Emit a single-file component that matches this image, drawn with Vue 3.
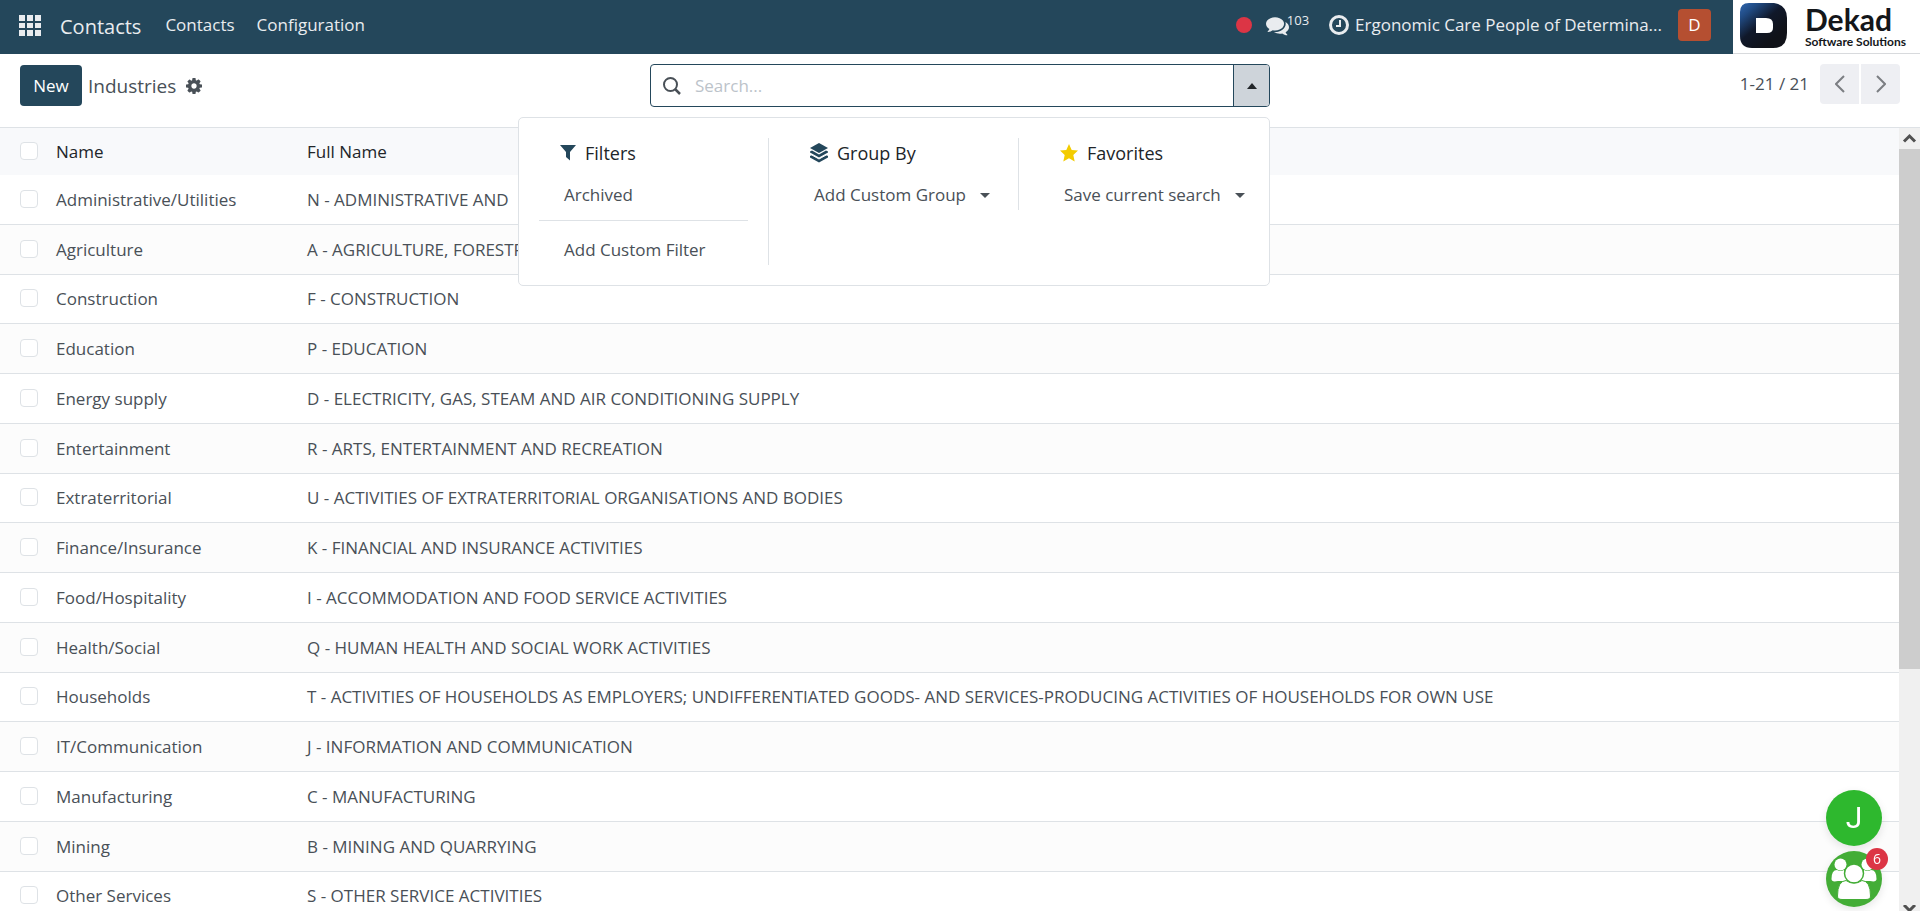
<script setup>
import { ref } from 'vue'

const query = ref('')
const allSelected = ref(false)

const industries = ref([
  { name: 'Administrative/Utilities', full: 'N - ADMINISTRATIVE AND' },
  { name: 'Agriculture', full: 'A - AGRICULTURE, FORESTR' },
  { name: 'Construction', full: 'F - CONSTRUCTION' },
  { name: 'Education', full: 'P - EDUCATION' },
  { name: 'Energy supply', full: 'D - ELECTRICITY, GAS, STEAM AND AIR CONDITIONING SUPPLY' },
  { name: 'Entertainment', full: 'R - ARTS, ENTERTAINMENT AND RECREATION' },
  { name: 'Extraterritorial', full: 'U - ACTIVITIES OF EXTRATERRITORIAL ORGANISATIONS AND BODIES' },
  { name: 'Finance/Insurance', full: 'K - FINANCIAL AND INSURANCE ACTIVITIES' },
  { name: 'Food/Hospitality', full: 'I - ACCOMMODATION AND FOOD SERVICE ACTIVITIES' },
  { name: 'Health/Social', full: 'Q - HUMAN HEALTH AND SOCIAL WORK ACTIVITIES' },
  { name: 'Households', full: 'T - ACTIVITIES OF HOUSEHOLDS AS EMPLOYERS; UNDIFFERENTIATED GOODS- AND SERVICES-PRODUCING ACTIVITIES OF HOUSEHOLDS FOR OWN USE' },
  { name: 'IT/Communication', full: 'J - INFORMATION AND COMMUNICATION' },
  { name: 'Manufacturing', full: 'C - MANUFACTURING' },
  { name: 'Mining', full: 'B - MINING AND QUARRYING' },
  { name: 'Other Services', full: 'S - OTHER SERVICE ACTIVITIES' },
].map((row) => ({ ...row, selected: false })))

function toggleAll() {
  industries.value.forEach((row) => { row.selected = allSelected.value })
}
</script>

<template>
  <div class="app">
    <header class="topbar">
      <nav class="nav">
        <button class="apps" type="button" aria-label="Home menu">
          <svg width="22" height="21" viewBox="0 0 22 21" fill="#e9ecef">
            <path d="M0 0h6v6H0zM8 0h6v6H8zM16 0h6v6h-6zM0 8h6v5H0zM8 8h6v5H8zM16 8h6v5h-6zM0 15h6v6H0zM8 15h6v6H8zM16 15h6v6h-6z" />
          </svg>
        </button>
        <a class="brand" href="#">Contacts</a>
        <a class="menu" href="#">Contacts</a>
        <a class="menu" href="#">Configuration</a>
        <div class="systray">
          <span class="dot"></span>
          <button class="messages" type="button" aria-label="Messages">
            <svg width="23" height="23" viewBox="0 0 1792 1792" fill="#e9ecef">
              <path d="M1408 768q0 139-94 257t-256.500 186.500-353.500 68.500q-86 0-176-16-124 88-278 128-36 9-86 16h-3q-11 0-20.500-8t-11.500-21q-1-3-1-6.500t.5-6.500 2-6l2.500-5 3.500-5.500 4-5 4.500-5 4-4.500q5-6 23-25t26-29.500 22.500-29 25-38.500 20.500-44q-124-72-195-177t-71-224q0-139 94-257t256.500-186.500 353.500-68.500 353.500 68.500 256.500 186.500 94 257zm384 256q0 120-71 224.500t-195 176.500q10 24 20.500 44t25 38.500 22.500 29 26 29.500 23 25q1 1 4 4.500t4.500 5 4 5 3.500 5.500l2.500 5 2 6 .5 6.500-1 6.500q-3 14-13 22t-22 7q-50-7-86-16-154-40-278-128-90 16-176 16-271 0-472-132 58 4 88 4 161 0 309-45t264-129q125-92 192-212t67-254q0-77-23-152 129 71 204 178t75 230z" />
            </svg>
            <span class="count">103</span>
          </button>
          <button class="activity" type="button" aria-label="Activities">
            <svg width="20" height="20" viewBox="0 0 20 20" fill="none" stroke="#e9ecef">
              <circle cx="10" cy="10" r="8.500" stroke-width="3" />
              <path d="M11 5v6H7" stroke-width="2" />
            </svg>
          </button>
          <button class="company" type="button">Ergonomic Care People of Determina...</button>
          <button class="user" type="button" aria-label="User menu">D</button>
        </div>
      </nav>
      <a class="logo" href="#">
        <svg width="47" height="45" viewBox="0 0 47 45">
          <defs>
            <linearGradient id="mark" x1="0" y1="0" x2="0.700" y2="0.800">
              <stop offset="0" stop-color="#2f66b0" />
              <stop offset="0.250" stop-color="#204a82" />
              <stop offset="0.600" stop-color="#10182a" />
              <stop offset="1" stop-color="#101218" />
            </linearGradient>
          </defs>
          <path d="M9 0H34Q47 2 47 15V30Q47 45 33 45H12Q0 45 0 33V9Q0 0 9 0Z" fill="url(#mark)" />
          <path d="M16 15H26Q33 15 33 21V25Q33 30 27 30H16Z" fill="#fff" />
        </svg>
        <span class="wordmark">
          <span class="word">Dekad</span>
          <span class="tagline">Software Solutions</span>
        </span>
      </a>
    </header>

    <section class="control">
      <div class="crumbs">
        <button class="new" type="button">New</button>
        <h1>Industries</h1>
        <button class="gear" type="button" aria-label="Actions">
          <svg width="16" height="16" viewBox="0 -128 1536 1536" fill="#495057">
            <path d="M1024 640q0-106-75-181t-181-75-181 75-75 181 75 181 181 75 181-75 75-181zm512-109v222q0 12-8 23t-20 13l-185 28q-19 54-39 91 35 50 107 138 10 12 10 25t-9 23q-27 37-99 108t-94 71q-12 0-26-9l-138-108q-44 23-91 38-16 136-29 186-7 28-36 28h-222q-14 0-24.500-8.500t-11.500-21.500l-28-184q-49-16-90-37l-141 107q-10 9-25 9-14 0-25-11-126-114-165-168-7-10-7-23 0-12 8-23 15-21 51-66.500t54-70.500q-27-50-41-99l-183-27q-13-2-21-12.500t-8-23.500v-222q0-12 8-23t19-13l186-28q14-46 39-92-40-57-107-138-10-12-10-24 0-10 9-23 26-36 98.500-107.500t94.500-71.500q13 0 26 10l138 107q44-23 91-38 16-136 29-186 7-28 36-28h222q14 0 24.500 8.500t11.500 21.500l28 184q49 16 90 37l142-107q9-9 24-9 13 0 25 10 129 119 165 170 7 8 7 22 0 12-8 23-15 21-51 66.500t-54 70.500q26 50 41 98l183 28q13 2 21 12.500t8 23.500z" />
          </svg>
        </button>
      </div>

      <div class="search">
        <div class="searchbox">
          <svg class="lens" width="18" height="18" viewBox="0 0 18 18" fill="none" stroke="#495057">
            <circle cx="7.500" cy="7.500" r="6.500" stroke-width="2" />
            <path d="M12 12l5 5" stroke-width="2.500" />
          </svg>
          <input v-model="query" type="text" placeholder="Search..." aria-label="Search" />
          <button class="toggle" type="button" aria-label="Toggle search panel">
            <svg width="10" height="6" viewBox="0 0 10 6" fill="#212529"><path d="M0 6L5 0l5 6z" /></svg>
          </button>
        </div>

        <div class="panel">
          <section class="group">
            <h2>
              <svg width="16" height="16" viewBox="0 0 16 16" fill="#24475b">
                <path d="M0 0h16L10 7v8.500L6 12V7z" />
              </svg>
              Filters
            </h2>
            <button class="item" type="button">Archived</button>
            <hr />
            <button class="item" type="button">Add Custom Filter</button>
          </section>
          <section class="group">
            <h2>
              <svg width="18" height="20" viewBox="0 0 18 20" fill="#24475b">
                <path d="M9 0l9 5-9 5-9-5z" />
                <path d="M0 8.500l2-1 7 4 7-4 2 1v1l-9 5-9-5z" />
                <path d="M0 13l2-1 7 4 7-4 2 1v1.500L9 19.500 0 14.500z" />
                <path d="M0 11l9 5 9-5" fill="none" stroke="#fff" stroke-width="1" />
              </svg>
              Group By
            </h2>
            <button class="item" type="button">
              Add Custom Group
              <svg width="10" height="5" viewBox="0 0 10 5" fill="#495057"><path d="M0 0h10L5 5z" /></svg>
            </button>
          </section>
          <section class="group">
            <h2>
              <svg width="18" height="18" viewBox="0 0 18 18" fill="#f3cc00">
                <path d="M9 0l2.700 5.900 6.300.7-4.700 4.300 1.400 6.600L9 14.200l-5.700 3.300 1.400-6.600L0 6.600l6.300-.7z" />
              </svg>
              Favorites
            </h2>
            <button class="item" type="button">
              Save current search
              <svg width="10" height="5" viewBox="0 0 10 5" fill="#495057"><path d="M0 0h10L5 5z" /></svg>
            </button>
          </section>
        </div>
      </div>

      <div class="pager">
        <span>1-21 / 21</span>
        <div class="steps">
          <button type="button" aria-label="Previous">
            <svg width="10" height="18" viewBox="0 0 10 18" fill="none" stroke="#7b7e82" stroke-width="2"><path d="M9 1L1 9l8 8" /></svg>
          </button>
          <button type="button" aria-label="Next">
            <svg width="10" height="18" viewBox="0 0 10 18" fill="none" stroke="#7b7e82" stroke-width="2"><path d="M1 1l8 8-8 8" /></svg>
          </button>
        </div>
      </div>
    </section>

    <main class="content">
      <div class="list">
        <table>
          <thead>
            <tr>
              <th class="pick"><input v-model="allSelected" type="checkbox" aria-label="Select all" @change="toggleAll" /></th>
              <th class="name">Name</th>
              <th>Full Name</th>
            </tr>
          </thead>
          <tbody>
            <tr v-for="row in industries" :key="row.name">
              <td class="pick"><input v-model="row.selected" type="checkbox" :aria-label="row.name" /></td>
              <td>{{ row.name }}</td>
              <td>{{ row.full }}</td>
            </tr>
          </tbody>
        </table>
      </div>
      <div class="scrollbar" aria-hidden="true">
        <svg class="up" width="21" height="21" viewBox="0 0 21 21" fill="none" stroke="#505050" stroke-width="3"><path d="M5 13.500l5.500-5.500 5.500 5.500" /></svg>
        <div class="thumb"></div>
        <div class="track"></div>
        <svg width="21" height="6" viewBox="0 0 21 6" fill="none" stroke="#505050" stroke-width="3"><path d="M5 0l5.500 5.500L16 0" /></svg>
      </div>
    </main>

    <aside class="chats">
      <button class="bubble" type="button">J</button>
      <button class="bubble team" type="button" aria-label="Team channel">
        <svg width="56" height="56" viewBox="0 0 56 56" fill="#fff">
          <circle cx="14.500" cy="13.500" r="6" />
          <circle cx="41.500" cy="13.500" r="6" />
          <path d="M5.500 28Q5.500 19 11 19Q14.500 21 18 19Q19.500 26 23 30H12Q5.500 31.500 5.500 28Z" />
          <path d="M50.500 28Q50.500 19 45 19Q41.500 21 38 19Q36.500 26 33 30H44Q50.500 31.500 50.500 28Z" />
          <circle cx="28" cy="22.500" r="9.500" stroke="#43ad36" stroke-width="1.500" />
          <path d="M11.500 45Q11.500 30 20 29.500Q28 35 36 29.500Q44.500 30 44.500 45Q44.500 48.500 40 48.500H16Q11.500 48.500 11.500 45Z" stroke="#43ad36" />
        </svg>
        <span class="badge">6</span>
      </button>
    </aside>
  </div>
</template>

<style>
body {
  margin: 0;
  overflow: hidden;
}
</style>

<style scoped>
.app {
  display: flex;
  flex-direction: column;
  height: 100vh;
  overflow: hidden;
  background: #fff;
  color: #495057;
  font-family: "Open Sans", "Noto Sans", sans-serif;
  font-size: 17px;
  line-height: 24px;
}

button {
  display: flex;
  align-items: center;
  justify-content: center;
  padding: 0;
  border: 0;
  background: none;
  color: inherit;
  font: inherit;
  white-space: nowrap;
  cursor: pointer;
}

a {
  color: inherit;
  text-decoration: none;
}

svg {
  display: block;
  flex: none;
}

.topbar {
  display: flex;
  flex: none;
  height: 54px;
}

.nav {
  display: flex;
  flex: 1;
  align-items: center;
  padding: 0 22px 4px 19px;
  background: #24475b;
  color: #e9ecef;
}

.brand {
  margin: 4px 24px 0 19px;
  font-size: 20px;
}

.menu {
  margin-right: 22px;
}

.systray {
  display: flex;
  align-items: center;
  margin-left: auto;
}

.dot {
  width: 16px;
  height: 16px;
  border-radius: 50%;
  background: #dc3545;
}

.messages {
  align-items: flex-start;
  margin: 0 20px 0 14px;
}

.count {
  margin-left: -2px;
  font-size: 13px;
  line-height: 12px;
}

.activity {
  margin-right: 6px;
}

.company {
  margin-right: 16px;
}

.user {
  width: 33px;
  height: 32px;
  border-radius: 4px;
  background: #b54f31;
  color: #fff;
}

.logo {
  display: flex;
  gap: 18px;
  align-items: center;
  box-sizing: border-box;
  width: 187px;
  padding: 0 0 2px 7px;
  border-bottom: 1px solid #d8dadd;
  color: #14161a;
}

.wordmark {
  display: flex;
  flex-direction: column;
  font-family: Lato, sans-serif;
  font-weight: 700;
  white-space: nowrap;
}

.word {
  font-size: 30px;
  line-height: 32px;
}

.tagline {
  font-size: 12px;
  line-height: 14px;
}

.control {
  display: grid;
  grid-template-columns: 1fr minmax(0, 620px) 1fr;
  flex: none;
  align-items: start;
  padding: 10px 20px 20px;
  border-bottom: 1px solid #dee2e6;
}

.crumbs {
  display: flex;
  align-items: center;
  padding-top: 1px;
}

.new {
  width: 62px;
  height: 41px;
  margin-right: 6px;
  border-radius: 4px;
  background: #24475b;
  color: #fff;
}

h1 {
  margin: 0 10px 0 0;
  font-size: 19px;
  font-weight: 400;
}

.search {
  position: relative;
}

.searchbox {
  display: flex;
  align-items: center;
  height: 41px;
  border: 1px solid #24475b;
  border-radius: 4px;
  overflow: hidden;
}

.lens {
  margin: 0 14px 0 12px;
}

.searchbox input {
  flex: 1;
  min-width: 0;
  padding: 0;
  border: 0;
  outline: 0;
  color: inherit;
  font: inherit;
}

.searchbox input::placeholder {
  color: #bcc3ca;
}

.toggle {
  width: 36px;
  height: 100%;
  border-left: 1px solid #24475b;
  background: #ced4da;
}

.panel {
  position: absolute;
  top: 53px;
  right: 0;
  z-index: 2;
  display: grid;
  grid-template-columns: repeat(3, 250px);
  align-items: start;
  padding: 20px 0;
  border: 1px solid #dee2e6;
  border-radius: 5px;
  background: #fff;
}

.group {
  padding: 0 20px;
  border-right: 1px solid #dee2e6;
}

.group:last-child {
  border-right: 0;
}

h2 {
  display: flex;
  gap: 9px;
  align-items: center;
  height: 30px;
  margin: 0 0 12px;
  padding-left: 21px;
  color: #212529;
  font-size: 18px;
  font-weight: 400;
}

.item {
  gap: 14px;
  height: 30px;
  padding-left: 25px;
}

hr {
  height: 1px;
  margin: 10px 0 14px;
  border: 0;
  background: #dee2e6;
}

.pager {
  display: flex;
  gap: 11px;
  align-items: center;
  justify-content: flex-end;
}

.steps {
  display: flex;
  gap: 2px;
}

.steps button {
  width: 39px;
  height: 40px;
  border-radius: 4px 0 0 4px;
  background: #eeeff3;
}

.steps button:last-child {
  border-radius: 0 4px 4px 0;
}

.content {
  display: flex;
  flex: 1;
  min-height: 0;
}

.list {
  flex: 1;
  min-width: 0;
  overflow: hidden;
}

table {
  width: 100%;
  border-spacing: 0;
  table-layout: fixed;
}

th,
td {
  box-sizing: border-box;
  height: 50px;
  padding: 0 6px;
  border-bottom: 1px solid #dee2e6;
  text-align: left;
  white-space: nowrap;
}

th {
  height: 47px;
  border-bottom: 0;
  background: #f8f9fb;
  color: #212529;
  font-weight: 400;
}

tbody tr:nth-child(even) {
  background: #fcfcfc;
}

tbody tr:nth-child(4n + 3) td {
  height: 49px;
}

.pick {
  width: 50px;
  padding: 0 0 2px 20px;
}

.name {
  width: 251px;
}

.pick input {
  display: block;
  appearance: none;
  box-sizing: border-box;
  width: 18px;
  height: 18px;
  margin: 0;
  border: 1px solid #dee2e6;
  border-radius: 4px;
  background: #fff;
}

.pick input:checked {
  background: #24475b;
}

.scrollbar {
  display: flex;
  flex-direction: column;
  width: 21px;
  background: #f0f0f0;
}

.thumb {
  flex: 520;
  background: #cdcdcd;
}

.track {
  flex: 236;
}

.chats {
  position: fixed;
  right: 38px;
  bottom: 4px;
  z-index: 3;
  display: flex;
  flex-direction: column;
  gap: 5px;
}

.bubble {
  position: relative;
  width: 56px;
  height: 56px;
  border-radius: 50%;
  background: #2eb82e;
  box-shadow: 0 3px 8px rgba(0, 0, 0, 0.1);
  color: #fff;
  font-family: Roboto, sans-serif;
  font-size: 30px;
}

.team {
  background: #43ad36;
}

.badge {
  position: absolute;
  top: -3px;
  right: -6px;
  width: 22px;
  height: 22px;
  border-radius: 50%;
  background: #dc3545;
  font-family: "Open Sans", "Noto Sans", sans-serif;
  font-size: 14px;
  line-height: 22px;
  text-align: center;
}
</style>
